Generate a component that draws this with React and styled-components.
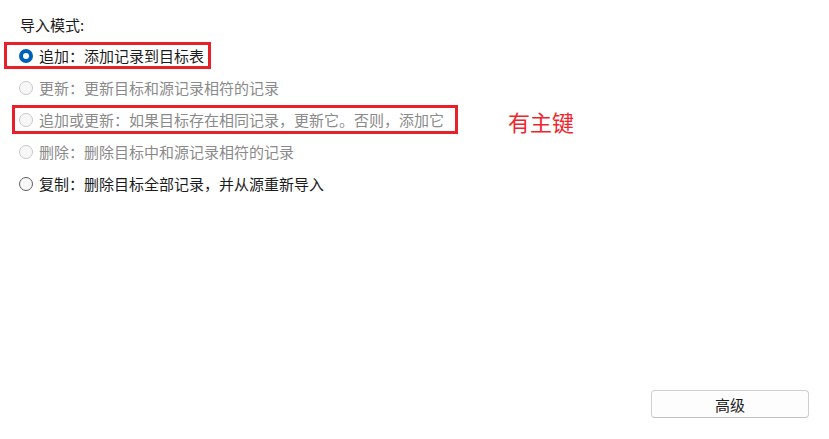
import React from 'react';
import styled, { createGlobalStyle, css } from 'styled-components';

const GlobalStyle = createGlobalStyle`
    html, body {
        margin: 0;
        padding: 0;
        background: #ffffff;
    }

    body {
        font-family: "Noto Sans CJK SC", "Noto Sans", sans-serif;
    }
`;

const modes = [
    { id: 'append', label: '追加：添加记录到目标表', checked: true, mark: { top: 2, bottom: 3, left: -15, right: -7 } },
    { id: 'update', label: '更新：更新目标和源记录相符的记录', disabled: true },
    { id: 'upsert', label: '追加或更新：如果目标存在相同记录，更新它。否则，添加它', disabled: true, mark: { top: 1, bottom: 2, left: -7, right: -14 }, note: '有主键' },
    { id: 'delete', label: '删除：删除目标中和源记录相符的记录', disabled: true },
    { id: 'copy', label: '复制：删除目标全部记录，并从源重新导入' },
];

function App() {
    return (
        <Page>
            <GlobalStyle />
            <Heading>导入模式:</Heading>
            <ModeList>
                {modes.map((mode) => (
                    <ModeRow key={mode.id}>
                        <Option $disabled={mode.disabled}>
                            <Radio $checked={mode.checked} $disabled={mode.disabled} />
                            <OptionText>{mode.label}</OptionText>
                            {mode.mark && <MarkFrame $m={mode.mark} />}
                        </Option>
                        {mode.note && <Note>{mode.note}</Note>}
                    </ModeRow>
                ))}
            </ModeList>
            <Footer>
                <Button>高级</Button>
            </Footer>
        </Page>
    );
}

export default App;

const Page = styled.div`
    width: 829px;
    height: 439px;
    box-sizing: border-box;
    padding: 14px 20px 21px 19px;
    display: flex;
    flex-direction: column;
    color: #1b1b1b;
    font-size: 15px;
`;

const Heading = styled.div`
    line-height: 22px;
    height: 22px;
    padding-left: 1px;
`;

const ModeList = styled.div`
    margin-top: 4px;
    display: flex;
    flex-direction: column;
`;

const ModeRow = styled.div`
    display: flex;
    align-items: center;
    height: 32px;
`;

const Option = styled.label`
    position: relative;
    display: inline-flex;
    align-items: center;
    height: 100%;
    gap: 6px;
    color: ${(p) => (p.$disabled ? '#8a8a8a' : '#1b1b1b')};
`;

const Radio = styled.span`
    width: 14px;
    height: 14px;
    box-sizing: border-box;
    border-radius: 50%;
    flex-shrink: 0;
    border: 1px solid #5f5f5f;
    background: #f7f7f7;

    ${(p) => p.$disabled && css`
        border-color: #c8c8c8;
        background: #f7f7f7;
    `}

    ${(p) => p.$checked && css`
        border: 4.5px solid #005fb8;
        background: #ffffff;
    `}
`;

const OptionText = styled.span`
    line-height: 20px;
    white-space: nowrap;
`;

const MarkFrame = styled.span`
    position: absolute;
    top: ${(p) => p.$m.top}px;
    bottom: ${(p) => p.$m.bottom}px;
    left: ${(p) => p.$m.left}px;
    right: ${(p) => p.$m.right}px;
    border: 3px solid #e8202a;
    pointer-events: none;
`;

const Note = styled.span`
    margin-left: 64px;
    margin-top: 2px;
    color: #f0242c;
    font-size: 22px;
    line-height: 26px;
`;

const Footer = styled.div`
    margin-top: auto;
    display: flex;
    justify-content: flex-end;
`;

const Button = styled.button`
    width: 158px;
    height: 28px;
    box-sizing: border-box;
    border: 1px solid #d0d0d0;
    border-bottom-color: #c0c0c0;
    border-radius: 4px;
    background: #fdfdfd;
    color: #1b1b1b;
    font-family: "Noto Sans CJK SC", "Noto Sans", sans-serif;
    font-size: 15px;
    padding: 0;
`;
